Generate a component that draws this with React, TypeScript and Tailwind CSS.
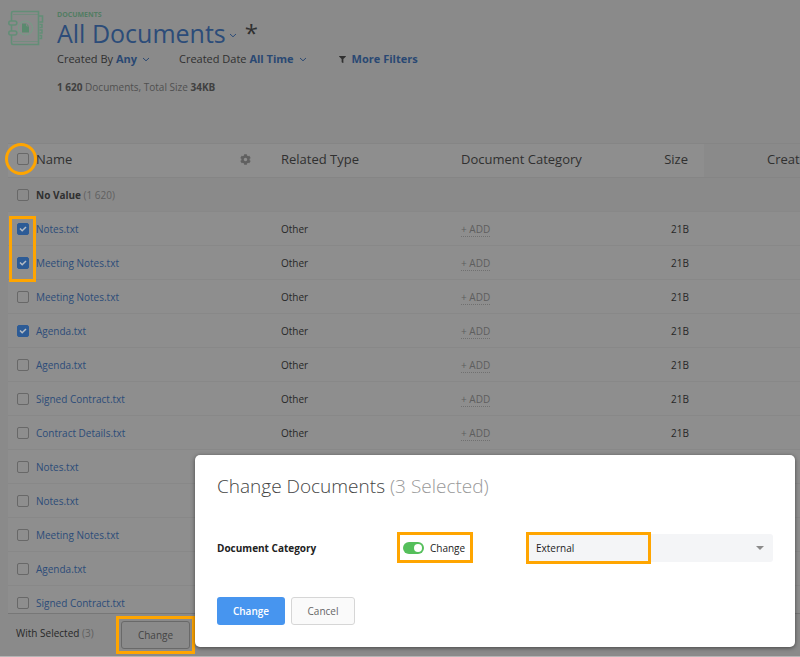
import { useState } from "react";
import clsx from "clsx";
import { FaCog, FaFilter } from "react-icons/fa";

const DOCUMENTS = [
  { id: 1, name: "Notes.txt" },
  { id: 2, name: "Meeting Notes.txt" },
  { id: 3, name: "Meeting Notes.txt" },
  { id: 4, name: "Agenda.txt" },
  { id: 5, name: "Agenda.txt" },
  { id: 6, name: "Signed Contract.txt" },
  { id: 7, name: "Contract Details.txt" },
  { id: 8, name: "Notes.txt" },
  { id: 9, name: "Notes.txt" },
  { id: 10, name: "Meeting Notes.txt" },
  { id: 11, name: "Agenda.txt" },
  { id: 12, name: "Signed Contract.txt" },
];

function Chevron({ className }: { className?: string }) {
  return (
    <svg viewBox="0 0 8 5" className={clsx("h-[5px] w-2", className)} fill="none" stroke="currentColor" aria-hidden="true">
      <path d="M1 1 L4 3.8 L7 1" />
    </svg>
  );
}

function NotebookIcon() {
  return (
    <svg viewBox="0 0 36 36" className="h-9 w-9 shrink-0" fill="none" stroke="#638e77" strokeWidth="1.6" aria-hidden="true">
      <path d="M3.500 11V3Q3.500 1.500 5 1.500H30.500V6H34.500V12H31.500M3.500 15V21M3.500 25V33Q3.500 34.500 5 34.500H30.500V29.500M30.500 6V29.500" />
      <path d="M5 4.500H30M5 31.500H30" strokeWidth="0.600" />
      <path d="M31.500 14.500H34V17.500H31.500M31.500 20H34V23H31.500M31.500 25.500H33.500V28.500H31.500" strokeWidth="1.500" />
      <rect x="0.800" y="11" width="8" height="4" rx="2" />
      <rect x="0.800" y="21" width="8" height="4" rx="2" />
      <circle cx="17.500" cy="18" r="7" stroke="#789a87" strokeWidth="1.200" />
      <path d="M14 13.500H18.500L21 16V22.500H14Z" fill="#5a8a6e" stroke="none" />
      <path d="M18.500 13.500V16H21" stroke="#8a8a8a" strokeWidth="0.700" />
    </svg>
  );
}

type CheckboxProps = {
  label: string;
  checked: boolean;
  onChange: () => void;
};

function Checkbox({ label, checked, onChange }: CheckboxProps) {
  return (
    <span className="grid h-3 w-3 shrink-0 place-items-center">
      <input
        type="checkbox"
        aria-label={label}
        checked={checked}
        onChange={onChange}
        className="col-start-1 row-start-1 h-3 w-3 appearance-none rounded-[2px] border border-[#686868] checked:border-[#2c5b96] checked:bg-[#2c5b96]"
      />
      {checked ? (
        <svg viewBox="0 0 12 12" className="pointer-events-none col-start-1 row-start-1 h-3 w-3" fill="none" stroke="#b5bcc4" strokeWidth="1.500" aria-hidden="true">
          <path d="M3 5.500L5.200 7.800L9 4" />
        </svg>
      ) : null}
    </span>
  );
}

function PageHeader() {
  return (
    <header className="flex h-[143px] shrink-0 items-start gap-[13px] pt-[10px]">
      <NotebookIcon />
      <div>
        <div className="text-[7px] leading-[9px] font-bold text-[#527d63]">DOCUMENTS</div>
        <div className="flex items-center text-[#2c4c79]">
          <h1 className="text-[25px] leading-[28px]">All Documents</h1>
          <button type="button" aria-label="Choose view" className="ml-[3px] pt-1">
            <Chevron />
          </button>
          <span className="ml-2 text-[24px] leading-[28px] text-[#303030]">*</span>
        </div>
        <div className="flex items-center text-[11px] leading-6 whitespace-nowrap text-[#303030]">
          <button type="button" className="flex items-center">
            Created By&nbsp;<b className="font-bold text-[#294873]">Any</b>
            <Chevron className="ml-[5px] text-[#294873]" />
          </button>
          <button type="button" className="ml-[29px] flex items-center">
            Created Date&nbsp;<b className="font-bold text-[#294873]">All Time</b>
            <Chevron className="ml-[5px] text-[#294873]" />
          </button>
          <button type="button" className="ml-8 flex items-center gap-[6px] font-bold text-[#294873]">
            <FaFilter className="h-[7px] w-[7px] text-[#303030]" />
            More Filters
          </button>
        </div>
        <p className="mt-[6px] text-[10px] leading-5 text-[#505050]">
          <b className="text-[#404040]">1 620</b> Documents, Total Size <b className="text-[#404040]">34KB</b>
        </p>
      </div>
    </header>
  );
}

type TableProps = {
  selected: number[];
  onToggle: (id: number) => void;
  onToggleAll: () => void;
};

function DocumentsTable({ selected, onToggle, onToggleAll }: TableProps) {
  const allSelected = selected.length === DOCUMENTS.length;
  return (
    <main className="-ml-2 min-h-0 flex-1 overflow-hidden pl-2">
      <table className="w-full min-w-[900px] table-fixed border-separate border-spacing-0 border-t border-[#858585] bg-[#8e8e8e] text-left text-[10px] leading-4 text-[#282828] [&_td]:border-b [&_td]:border-[#888888] [&_th]:border-b [&_th]:border-[#858585] [&_th]:pb-[3px]">
        <colgroup>
          <col className="w-[261px]" />
          <col className="w-[180px]" />
          <col className="w-[180px]" />
          <col className="w-[75px]" />
          <col />
        </colgroup>
        <thead>
          <tr className="h-[34px] text-[13px] leading-[18px] text-[#303030]">
            <th className="pl-[9px] font-normal">
              <div className="relative flex items-center gap-[7px]">
                <span className="pointer-events-none absolute -left-3 h-8 w-8 rounded-full border-3 border-[#ffa500]" />
                <Checkbox label="Select all documents" checked={allSelected} onChange={onToggleAll} />
                Name
                <button type="button" aria-label="Table settings" className="mr-[18px] ml-auto text-[#606060]">
                  <FaCog className="h-[11px] w-[11px]" />
                </button>
              </div>
            </th>
            <th className="pl-3 font-normal">Related Type</th>
            <th className="pl-3 font-normal">Document Category</th>
            <th className="pr-4 text-right font-normal">Size</th>
            <th className="bg-[#8a8a8a] pl-[63px] font-normal">Created</th>
          </tr>
        </thead>
        <tbody>
          <tr className="h-[34px] bg-[#8a8a8a]">
            <td colSpan={5} className="pl-[9px]">
              <div className="flex items-center gap-[7px]">
                <Checkbox label="Select No Value group" checked={allSelected} onChange={onToggleAll} />
                <span className="text-[#606060]">
                  <b className="text-[#303030]">No Value</b> (1 620)
                </span>
              </div>
            </td>
          </tr>
          {DOCUMENTS.map((doc) => (
            <tr key={doc.id} className="h-[34px]">
              <td className="pl-[9px]">
                <div className="relative flex items-center gap-[7px]">
                  {doc.id === 1 ? (
                    <span className="pointer-events-none absolute -top-[5px] -left-2 h-[66px] w-[27px] border-3 border-[#ffa500]" />
                  ) : null}
                  <Checkbox
                    label={`Select ${doc.name}`}
                    checked={selected.includes(doc.id)}
                    onChange={() => onToggle(doc.id)}
                  />
                  <a href="#" className="text-[#2c4c79]">
                    {doc.name}
                  </a>
                </div>
              </td>
              <td className="pl-3">Other</td>
              <td className="pl-3">
                <button type="button" className="border-b border-dotted border-[#707070] leading-[13px] text-[#5e5e5e]">
                  + ADD
                </button>
              </td>
              <td className="pr-[15px] text-right">21B</td>
              <td />
            </tr>
          ))}
        </tbody>
      </table>
    </main>
  );
}

function ChangeDialog({ count }: { count: number }) {
  const [enabled, setEnabled] = useState(true);
  return (
    <section
      role="dialog"
      aria-labelledby="dialog-title"
      className="absolute right-[5px] bottom-[9px] w-[600px] max-w-full rounded-[5px] bg-white px-[22px] pt-4 pb-[22px] shadow-[0_1px_4px_rgba(0,0,0,0.5)]"
    >
      <h2 id="dialog-title" className="text-[19px] leading-[30px] font-light text-[#444444]">
        Change Documents <span className="text-[#999999]">({count} Selected)</span>
      </h2>
      <div className="mt-[31px] flex items-center text-[10px] leading-4 text-[#222222]">
        <label htmlFor="category" className="w-[180px] font-bold">
          Document Category
        </label>
        <label className="flex h-[31px] w-[76px] items-center gap-[6px] border-3 border-[#ffa500] pl-[3px]">
          <input
            type="checkbox"
            role="switch"
            checked={enabled}
            onChange={() => setEnabled((prev) => !prev)}
            className="relative h-3 w-[21px] shrink-0 appearance-none rounded-full bg-gray-300 before:absolute before:top-[2px] before:left-[2px] before:h-2 before:w-2 before:rounded-full before:bg-white checked:bg-[#55bf5b] checked:before:left-[11px]"
          />
          Change
        </label>
        <div className="relative ml-[53px] flex-1">
          <select
            id="category"
            defaultValue="External"
            className="block h-7 w-full appearance-none rounded-[3px] bg-[#f4f5f7] px-[10px] text-[10px] text-[#222222]"
          >
            <option>External</option>
            <option>Internal</option>
          </select>
          <svg viewBox="0 0 8 4" className="pointer-events-none absolute top-3 right-[9px] h-1 w-2" fill="#8b8b8b" aria-hidden="true">
            <path d="M0 0H8L4 4Z" />
          </svg>
          <span className="pointer-events-none absolute -top-[2px] left-0 h-8 w-[125px] border-3 border-[#ffa500]" />
        </div>
      </div>
      <div className="mt-[34px] flex gap-[6px] text-[10px]">
        <button type="button" className="h-7 w-[68px] rounded-[3px] bg-[#4795ef] font-semibold text-white">
          Change
        </button>
        <button type="button" className="h-7 w-16 rounded-[3px] border border-[#d6d6d6] bg-[#fafafa] text-[#666666]">
          Cancel
        </button>
      </div>
    </section>
  );
}

export default function App() {
  const [selected, setSelected] = useState([1, 2, 4]);

  const toggle = (id: number) =>
    setSelected((prev) => (prev.includes(id) ? prev.filter((it) => it !== id) : [...prev, id]));

  const toggleAll = () =>
    setSelected((prev) => (prev.length === DOCUMENTS.length ? [] : DOCUMENTS.map((doc) => doc.id)));

  return (
    <div className="relative flex h-screen flex-col overflow-hidden border-b border-[#b5b5b5] bg-[#8a8a8a] pl-2 font-['Open_Sans',sans-serif]">
      <PageHeader />
      <DocumentsTable selected={selected} onToggle={toggle} onToggleAll={toggleAll} />
      <footer className="flex h-[43px] shrink-0 items-start border-t border-[#777777] pl-2 text-[10px] text-[#282828]">
        <span className="w-[100px] pt-3">
          With Selected <span className="text-[#606060]">({selected.length})</span>
        </span>
        <div className="mt-[2px] border-3 border-[#ffa500] p-[2px]">
          <button type="button" className="h-7 w-[69px] rounded-[3px] border border-[#696969] text-[#444444]">
            Change
          </button>
        </div>
      </footer>
      <ChangeDialog count={selected.length} />
    </div>
  );
}
